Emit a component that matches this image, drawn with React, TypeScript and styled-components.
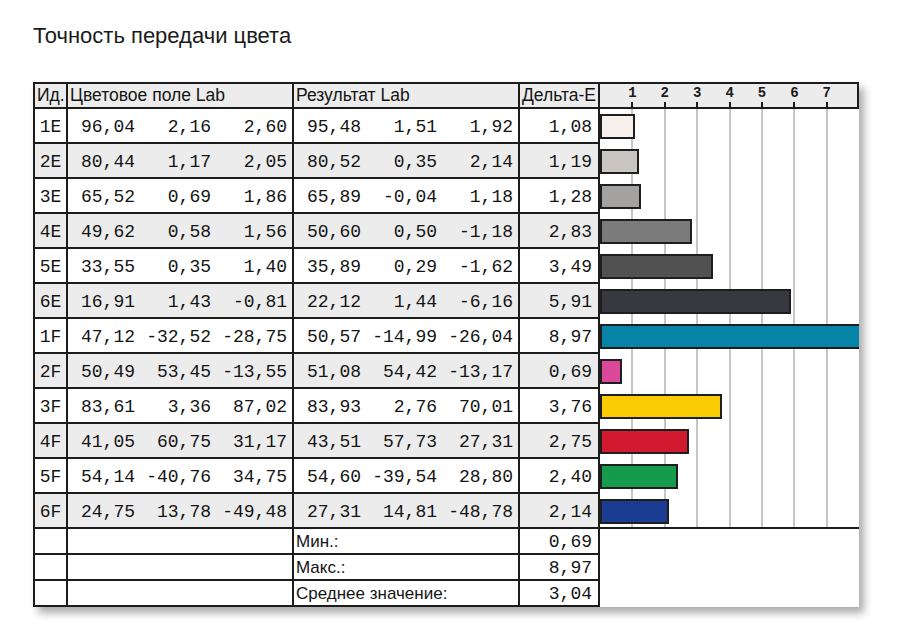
import React from "react";
import styled, { createGlobalStyle } from "styled-components";

const GlobalStyle = createGlobalStyle`
  html, body { margin: 0; padding: 0; background: #ffffff; }
  body { font-family: "Liberation Sans", Arial, sans-serif; }
`;

const UNIT = 32.4;
const LINE = "#1c1c1c";
const SHADE = "#ececec";

type Row = {
  id: string;
  lab: [string, string, string];
  res: [string, string, string];
  delta: string;
  color: string;
};

const rows: Row[] = [
  { id: "1E", lab: ["96,04", "2,16", "2,60"], res: ["95,48", "1,51", "1,92"], delta: "1,08", color: "#f7efea" },
  { id: "2E", lab: ["80,44", "1,17", "2,05"], res: ["80,52", "0,35", "2,14"], delta: "1,19", color: "#c9c6c2" },
  { id: "3E", lab: ["65,52", "0,69", "1,86"], res: ["65,89", "-0,04", "1,18"], delta: "1,28", color: "#a3a2a0" },
  { id: "4E", lab: ["49,62", "0,58", "1,56"], res: ["50,60", "0,50", "-1,18"], delta: "2,83", color: "#7b7b7b" },
  { id: "5E", lab: ["33,55", "0,35", "1,40"], res: ["35,89", "0,29", "-1,62"], delta: "3,49", color: "#515151" },
  { id: "6E", lab: ["16,91", "1,43", "-0,81"], res: ["22,12", "1,44", "-6,16"], delta: "5,91", color: "#383840" },
  { id: "1F", lab: ["47,12", "-32,52", "-28,75"], res: ["50,57", "-14,99", "-26,04"], delta: "8,97", color: "#0584a8" },
  { id: "2F", lab: ["50,49", "53,45", "-13,55"], res: ["51,08", "54,42", "-13,17"], delta: "0,69", color: "#d94899" },
  { id: "3F", lab: ["83,61", "3,36", "87,02"], res: ["83,93", "2,76", "70,01"], delta: "3,76", color: "#f8cc00" },
  { id: "4F", lab: ["41,05", "60,75", "31,17"], res: ["43,51", "57,73", "27,31"], delta: "2,75", color: "#d11a30" },
  { id: "5F", lab: ["54,14", "-40,76", "34,75"], res: ["54,60", "-39,54", "28,80"], delta: "2,40", color: "#169a4b" },
  { id: "6F", lab: ["24,75", "13,78", "-49,48"], res: ["27,31", "14,81", "-48,78"], delta: "2,14", color: "#1a3d91" },
];

const summary = [
  { label: "Мин.:", value: "0,69" },
  { label: "Макс.:", value: "8,97" },
  { label: "Среднее значение:", value: "3,04" },
];

const Page = styled.div`
  padding: 24px 0 40px 33px;
`;

const Title = styled.h1`
  margin: 0 0 34px;
  font: 400 22px/24px "Liberation Sans", Arial, sans-serif;
  color: #1b1b1b;
`;

const Sheet = styled.div`
  display: inline-grid;
  grid-template-columns: 31px 224px 224px 78px 259px;
  grid-template-rows: 23px repeat(12, 33px) 24px 24px 26px;
  gap: 2px;
  padding: 2px 0 0 2px;
  background: ${LINE};
  box-shadow: 5px 6px 8px rgba(0, 0, 0, 0.33);
`;

const Cell = styled.div<{ $shade?: boolean; $last?: boolean }>`
  box-sizing: border-box;
  display: flex;
  align-items: center;
  background: ${(p) => (p.$shade ? SHADE : "#ffffff")};
  border-bottom: ${(p) => (p.$last ? `2px solid ${LINE}` : "none")};
  color: #141414;
  white-space: nowrap;
  overflow: hidden;
`;

const HeadCell = styled(Cell)`
  background: ${SHADE};
  padding-left: 2px;
  font: 400 17.5px/1 "Liberation Sans", Arial, sans-serif;
`;

const IdCell = styled(Cell)`
  justify-content: center;
  padding-top: 2px;
  font: 400 18px/1 "Liberation Mono", "Courier New", monospace;
`;

const TripleCell = styled(Cell)`
  display: grid;
  grid-template-columns: 1fr 76px 76px;
  align-items: center;
  padding: 2px 5px 0 0;
  font: 400 18px/1 "Liberation Mono", "Courier New", monospace;
`;

const Num = styled.span`
  text-align: right;
`;

const DeltaCell = styled(Cell)`
  justify-content: flex-end;
  padding: 2px 6px 0 0;
  font: 400 18px/1 "Liberation Mono", "Courier New", monospace;
`;

const LabelCell = styled(Cell)`
  padding: 1px 0 0 2px;
  font: 400 17px/1 "Liberation Sans", Arial, sans-serif;
`;

const ChartHead = styled.div`
  position: relative;
  box-sizing: border-box;
  background: ${SHADE};
  border-right: 2px solid ${LINE};
`;

const Tick = styled.div`
  position: absolute;
  top: 0;
  bottom: 0;
  width: 0;
  display: flex;
  flex-direction: column;
  align-items: center;
`;

const TickLabel = styled.span`
  margin-top: 2px;
  font: 700 14px/1 "Liberation Mono", "Courier New", monospace;
  color: #1a1a1a;
`;

const TickMark = styled.span`
  margin-top: auto;
  width: 2px;
  height: 5px;
  flex: none;
  background: ${LINE};
`;

const ChartBody = styled.div`
  grid-column: 5;
  grid-row: 2 / span 12;
  position: relative;
  overflow: hidden;
  background: #ffffff;
`;

const ChartFoot = styled.div`
  grid-column: 5;
  grid-row: 14 / span 3;
  background: #ffffff;
`;

const GridLine = styled.div`
  position: absolute;
  top: 0;
  bottom: 0;
  width: 2px;
  margin-left: -1px;
  background: #c6c6c6;
`;

const Bars = styled.div`
  position: relative;
  display: flex;
  flex-direction: column;
`;

const BarRow = styled.div`
  box-sizing: border-box;
  height: 35px;
  padding-top: 5px;
`;

const Bar = styled.div<{ $color: string }>`
  box-sizing: border-box;
  height: 25px;
  border: 2px solid #1e1e1e;
  background: ${(p) => p.$color};
`;

const ticks = [1, 2, 3, 4, 5, 6, 7];

const toNum = (s: string) => parseFloat(s.replace(",", "."));

export default function App() {
  return (
    <Page>
      <GlobalStyle />
      <Title>Точность передачи цвета</Title>
      <Sheet>
        <HeadCell>Ид.</HeadCell>
        <HeadCell>Цветовое поле Lab</HeadCell>
        <HeadCell>Результат Lab</HeadCell>
        <HeadCell>Дельта-E</HeadCell>
        <ChartHead>
          {ticks.map((t) => (
            <Tick key={t} style={{ left: t * UNIT }}>
              <TickLabel>{t}</TickLabel>
              <TickMark />
            </Tick>
          ))}
        </ChartHead>

        <ChartBody>
          {ticks.map((t) => (
            <GridLine key={t} style={{ left: t * UNIT }} />
          ))}
          <Bars>
            {rows.map((r) => (
              <BarRow key={r.id}>
                <Bar $color={r.color} style={{ width: toNum(r.delta) * UNIT }} />
              </BarRow>
            ))}
          </Bars>
        </ChartBody>
        <ChartFoot />

        {rows.map((r, i) => {
          const shade = i % 2 === 1;
          return (
            <React.Fragment key={r.id}>
              <IdCell $shade={shade}>{r.id}</IdCell>
              <TripleCell $shade={shade}>
                {r.lab.map((v, k) => (
                  <Num key={k}>{v}</Num>
                ))}
              </TripleCell>
              <TripleCell $shade={shade}>
                {r.res.map((v, k) => (
                  <Num key={k}>{v}</Num>
                ))}
              </TripleCell>
              <DeltaCell $shade={shade}>{r.delta}</DeltaCell>
            </React.Fragment>
          );
        })}

        {summary.map((s, i) => {
          const last = i === summary.length - 1;
          return (
            <React.Fragment key={s.label}>
              <Cell $last={last} />
              <Cell $last={last} />
              <LabelCell $last={last}>{s.label}</LabelCell>
              <DeltaCell $last={last}>{s.value}</DeltaCell>
            </React.Fragment>
          );
        })}
      </Sheet>
    </Page>
  );
}
